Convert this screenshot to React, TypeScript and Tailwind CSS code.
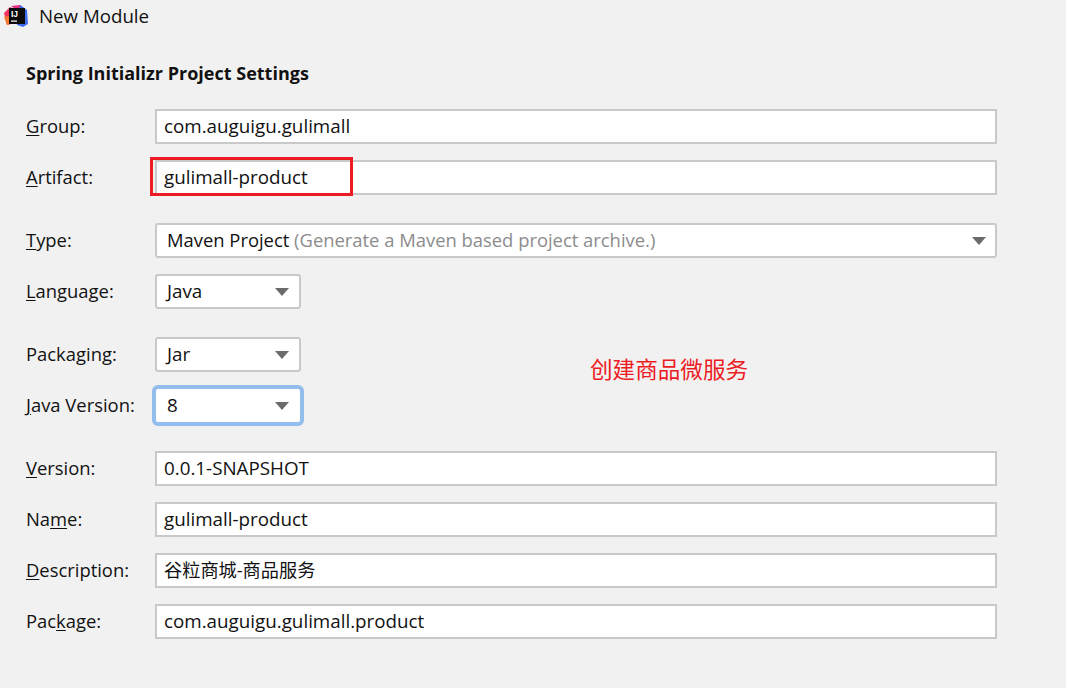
import type { ReactNode } from "react";

const font = "[font-family:'Open_Sans','Noto_Sans_CJK_SC',sans-serif]";

function Label({ before, mark, after }: { before?: string; mark: string; after: string }) {
  return (
    <label className="-mt-[2px] w-[129px] shrink-0 text-[18.4px] leading-[35px] text-[#111]">
      {before}
      <span className="underline underline-offset-2">{mark}</span>
      {after}
    </label>
  );
}

function Row({ label, children }: { label: ReactNode; children: ReactNode }) {
  return (
    <div className="flex h-[35px] items-center">
      {label}
      {children}
    </div>
  );
}

function Field({ value, cjk }: { value: string; cjk?: boolean }) {
  return (
    <div
      className={
        cjk
          ? "flex h-[35px] w-[842px] items-center border-2 border-[#c9c9c9] bg-white pl-[7px] text-[18.2px] text-[#111]"
          : "flex h-[35px] w-[842px] items-center border-2 border-[#c9c9c9] bg-white pl-[7px] text-[18.8px] text-[#111]"
      }
    >
      {value}
    </div>
  );
}

function Caret() {
  return (
    <svg width="14" height="8" viewBox="0 0 14 8" className="shrink-0">
      <path d="M0 0h14L7 8z" fill="#6b6b6b" />
    </svg>
  );
}

function Select({ value, focused }: { value: string; focused?: boolean }) {
  return (
    <div
      className={
        focused
          ? "flex h-[35px] w-[146px] items-center justify-between rounded-[3px] border border-[#93bdec] bg-white pl-[11px] pr-[11px] text-[18.8px] text-[#111] shadow-[0_0_0_3px_#93bdec]"
          : "flex h-[35px] w-[146px] items-center justify-between rounded-[3px] border-2 border-[#c9c9c9] bg-white pl-[10px] pr-[10px] text-[18.8px] text-[#111]"
      }
    >
      {value}
      <Caret />
    </div>
  );
}

function Logo() {
  return (
    <svg width="26" height="26" viewBox="0 0 26 26" className="shrink-0">
      <path d="M0 9 6 3l4 2-3 15-4 1z" fill="#f0345f" />
      <path d="M0 13l5-1 1 8-3 1z" fill="#f97a2e" />
      <path d="M7 2l9-1 4 3-6 3z" fill="#e8317e" />
      <path d="M16 1l7 5 1 14-5 3-6-2z" fill="#3d6cf0" />
      <rect x="5" y="4" width="16" height="16" fill="#0b0b0b" />
      <text x="7" y="12.5" fontSize="8.5" fontWeight="700" fill="#fff" fontFamily="'Liberation Sans',sans-serif">
        IJ
      </text>
      <rect x="7" y="16.5" width="6" height="1.2" fill="#fff" />
    </svg>
  );
}

export default function App() {
  return (
    <div className={`relative h-[688px] w-[1066px] overflow-hidden bg-[#f1f1f1] ${font}`}>
      <div className="flex h-[33px] items-center gap-[9px] pl-[4px] text-[18.7px] text-[#111]">
        <Logo />
        New Module
      </div>
      <div className="pl-[26px]">
        <h1 className="mt-[28px] text-[18px] leading-[24px] font-bold text-[#111]">
          Spring Initializr Project Settings
        </h1>
        <div className="mt-[24px] flex flex-col gap-[16px]">
          <Row label={<Label mark="G" after="roup:" />}>
            <Field value="com.auguigu.gulimall" />
          </Row>
          <Row label={<Label mark="A" after="rtifact:" />}>
            <Field value="gulimall-product" />
          </Row>
        </div>
        <div className="mt-[28px] flex flex-col gap-[16px]">
          <Row label={<Label mark="T" after="ype:" />}>
            <div className="flex h-[35px] w-[842px] items-center justify-between rounded-[3px] border-2 border-[#c9c9c9] bg-white pl-[10px] pr-[9px] text-[18.4px] text-[#111]">
              <span className="-mt-[2px]">
                Maven Project <span className="text-[#8c8c8c]">(Generate a Maven based project archive.)</span>
              </span>
              <Caret />
            </div>
          </Row>
          <Row label={<Label mark="L" after="anguage:" />}>
            <Select value="Java" />
          </Row>
        </div>
        <div className="mt-[28px] flex flex-col gap-[16px]">
          <Row label={<Label before="Packa" mark="g" after="ing:" />}>
            <Select value="Jar" />
          </Row>
          <Row label={<Label mark="J" after="ava Version:" />}>
            <Select value="8" focused />
          </Row>
        </div>
        <div className="mt-[28px] flex flex-col gap-[16px]">
          <Row label={<Label mark="V" after="ersion:" />}>
            <Field value="0.0.1-SNAPSHOT" />
          </Row>
          <Row label={<Label before="Na" mark="m" after="e:" />}>
            <Field value="gulimall-product" />
          </Row>
          <Row label={<Label mark="D" after="escription:" />}>
            <Field value="谷粒商城-商品服务" cjk />
          </Row>
          <Row label={<Label before="Pac" mark="k" after="age:" />}>
            <Field value="com.auguigu.gulimall.product" />
          </Row>
        </div>
      </div>
      {/* annotations pasted over the dialog */}
      <div className="absolute left-[150px] top-[157px] h-[39px] w-[203px] border-[3px] border-[#ed1c24]" />
      <div className="absolute left-[590px] top-[356px] text-[22.6px] leading-[28px] text-[#ed1c24]">创建商品微服务</div>
    </div>
  );
}
